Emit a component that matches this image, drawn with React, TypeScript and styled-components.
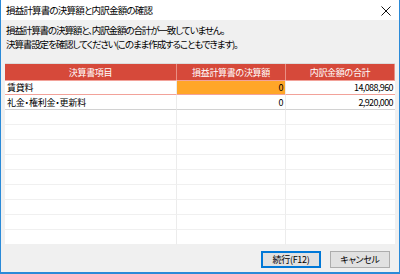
import React from "react";
import styled, { createGlobalStyle } from "styled-components";

const Global = createGlobalStyle`
  html, body { margin: 0; padding: 0; background: #ffffff; }
  body { font-family: "Noto Sans CJK JP", "Noto Sans", sans-serif; }
  * { box-sizing: border-box; }
`;

const Window = styled.div`
  width: 400px;
  height: 274px;
  display: flex;
  flex-direction: column;
  border-left: 1px solid #2a8ad8;
  border-right: 1px solid #2a8ad8;
  border-bottom: 2px solid #2a8ad8;
  background: #f0f0f0;
  font-family: "Noto Sans CJK JP", sans-serif;
  font-feature-settings: "palt";
  color: #000;
`;

const TitleBar = styled.div`
  height: 20px;
  background: #ffffff;
  display: flex;
  align-items: center;
  justify-content: space-between;
  padding: 0 8px 0 5px;
  font-size: 9.5px;
  letter-spacing: -0.8px;
  flex-shrink: 0;
`;

const CloseIcon = styled.svg`
  width: 10px;
  height: 10px;
  margin-top: 1px;
`;

const Message = styled.div`
  padding: 3px 5px 0 5px;
  font-size: 9.5px;
  letter-spacing: -1.1px;
  line-height: 14px;
  height: 43px;
`;

const Grid = styled.div`
  margin: 0 4px 0 4px;
  display: grid;
  grid-template-columns: 172px 109px 109px;
  background: #ffffff;
  border-top: 1px solid #dcdcdc;
`;

const HeadCell = styled.div`
  height: 16px;
  background: #d6493a;
  color: #ffffff;
  font-size: 9px;
  letter-spacing: -0.3px;
  display: flex;
  align-items: center;
  justify-content: center;
  border-right: 1px solid #e98f84;
  &:last-child { border-right: none; }
`;

const Cell = styled.div<{ $num?: boolean; $hl?: boolean; $sel?: boolean; $dark?: boolean }>`
  height: 15px;
  font-size: 9px;
  letter-spacing: ${(p) => (p.$num ? "-0.6px" : "-0.2px")};
  display: flex;
  align-items: center;
  padding: 0 2px;
  justify-content: ${(p) => (p.$num ? "flex-end" : "flex-start")};
  background: ${(p) => (p.$hl ? "#ffa628" : "#ffffff")};
  border-right: 1px solid #ececec;
  border-bottom: 1px solid ${(p) => (p.$sel ? "#f2a29a" : p.$dark ? "#d2d2d2" : "#f0f0f0")};
  ${(p) => (p.$sel ? "border-top: 1px solid #f2a29a;" : "")}
  &:nth-child(3n) { border-right: none; }
`;

const ButtonRow = styled.div`
  display: flex;
  justify-content: flex-end;
  gap: 9px;
  padding: 6px 9px 0 0;
`;

const Button = styled.button<{ $default?: boolean }>`
  width: 60px;
  height: 17px;
  padding: 0;
  font-family: "Noto Sans CJK JP", sans-serif;
  font-feature-settings: "palt";
  font-size: 9px;
  letter-spacing: -0.3px;
  color: #000;
  background: #e1e1e1;
  border: 1px solid ${(p) => (p.$default ? "#0078d7" : "#adadad")};
  ${(p) => (p.$default ? "box-shadow: inset 0 0 0 1px #0078d7;" : "")}
`;

const rows = [
  { name: "賃貸料", a: "0", b: "14,088,960", sel: true },
  { name: "礼金・権利金・更新料", a: "0", b: "2,920,000", dark: true },
];

export default function App() {
  const empty = Array.from({ length: 9 });
  return (
    <>
      <Global />
      <Window>
        <TitleBar>
          <span>損益計算書の決算額と内訳金額の確認</span>
          <CloseIcon viewBox="0 0 10 10">
            <path d="M0.5 0.5 L9.5 9.5 M9.5 0.5 L0.5 9.5" stroke="#111" strokeWidth="1" fill="none" />
          </CloseIcon>
        </TitleBar>
        <Message>
          <div>損益計算書の決算額と、内訳金額の合計が一致していません。</div>
          <div>決算書設定を確認してください(このまま作成することもできます)。</div>
        </Message>
        <Grid>
          <HeadCell>決算書項目</HeadCell>
          <HeadCell>損益計算書の決算額</HeadCell>
          <HeadCell>内訳金額の合計</HeadCell>
          {rows.map((r) => (
            <React.Fragment key={r.name}>
              <Cell $sel={r.sel} $dark={r.dark}>{r.name}</Cell>
              <Cell $num $hl={r.sel} $sel={r.sel} $dark={r.dark}>{r.a}</Cell>
              <Cell $num $sel={r.sel} $dark={r.dark}>{r.b}</Cell>
            </React.Fragment>
          ))}
          {empty.map((_, i) => (
            <React.Fragment key={i}>
              <Cell />
              <Cell />
              <Cell />
            </React.Fragment>
          ))}
        </Grid>
        <ButtonRow>
          <Button $default>続行(F12)</Button>
          <Button>キャンセル</Button>
        </ButtonRow>
      </Window>
    </>
  );
}
